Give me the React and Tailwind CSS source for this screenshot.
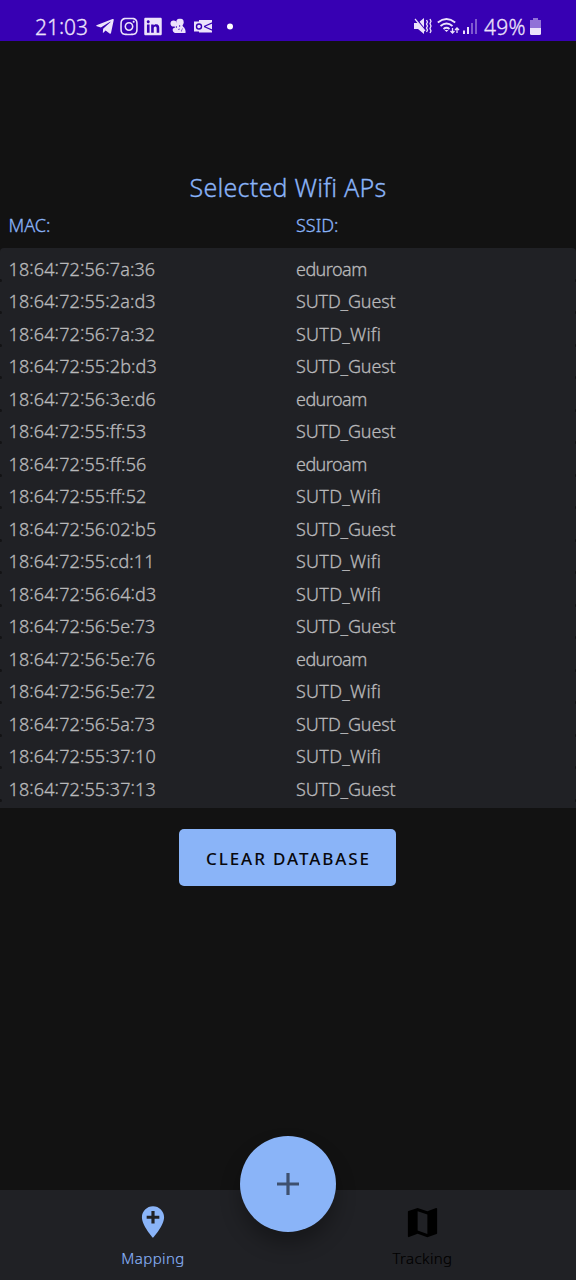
import { FaTelegramPlane, FaInstagram, FaLinkedin } from "react-icons/fa";

const rows = [
  ["18:64:72:56:7a:36", "eduroam"],
  ["18:64:72:55:2a:d3", "SUTD_Guest"],
  ["18:64:72:56:7a:32", "SUTD_Wifi"],
  ["18:64:72:55:2b:d3", "SUTD_Guest"],
  ["18:64:72:56:3e:d6", "eduroam"],
  ["18:64:72:55:ff:53", "SUTD_Guest"],
  ["18:64:72:55:ff:56", "eduroam"],
  ["18:64:72:55:ff:52", "SUTD_Wifi"],
  ["18:64:72:56:02:b5", "SUTD_Guest"],
  ["18:64:72:55:cd:11", "SUTD_Wifi"],
  ["18:64:72:56:64:d3", "SUTD_Wifi"],
  ["18:64:72:56:5e:73", "SUTD_Guest"],
  ["18:64:72:56:5e:76", "eduroam"],
  ["18:64:72:56:5e:72", "SUTD_Wifi"],
  ["18:64:72:56:5a:73", "SUTD_Guest"],
  ["18:64:72:55:37:10", "SUTD_Wifi"],
  ["18:64:72:55:37:13", "SUTD_Guest"],
];

const ssidTracking = {
  eduroam: "tracking-[-0.55px]",
  SUTD_Guest: "tracking-[-0.15px]",
  SUTD_Wifi: "tracking-[0.25px]",
};

// Colons that follow a digit sit a little above the baseline.
function Digits({ text }) {
  return text.split(/(?<=\d)(:)(?=\w)/).map((part, i) =>
    part === ":" ? (
      <span key={i} className="relative -top-[1.5px]">:</span>
    ) : (
      part
    ),
  );
}

function StatusBar() {
  return (
    <header className="flex h-[41px] shrink-0 items-end bg-[#3700b3] pr-[35px] pb-[4px] pl-[35px] text-[#ece2fb]">
      <span className="w-[60px] translate-y-px text-[21px] leading-[22px] whitespace-nowrap"><Digits text="21:03" /></span>
      <div className="flex h-[22px] translate-y-[0.5px] items-center">
        <FaTelegramPlane className="size-[20px]" />
        <FaInstagram className="ml-[4px] size-[20px]" />
        <FaLinkedin className="ml-[4px] size-[20px]" />
        <svg className="ml-[7px] h-[16px] w-[17px]" viewBox="0 0 17 16" fill="currentColor">
          <circle cx="3.6" cy="5" r="3.1" />
          <circle cx="10" cy="3.8" r="3.7" />
          <path d="M4 5l7-1 2 4c2 1.500 3 4 2.500 6.500H5C3.500 14 2 12 3 10l2-1Z" />
          <circle cx="6.400" cy="8.500" r=".7" fill="#3700b3" />
          <circle cx="9.600" cy="7.500" r=".7" fill="#3700b3" />
          <path d="m8 11 2-.5M11.500 13q-.5-2 1.500-3" fill="none" stroke="#3700b3" strokeWidth=".6" />
        </svg>
        <svg className="ml-[7px] h-[16px] w-[19px]" viewBox="0 0 19 16">
          <path d="M5 1.500h13v12.500H5Z" fill="currentColor" />
          <path d="m10 8 9-4M10 8l9 4" fill="none" stroke="#3700b3" strokeWidth="1.300" />
          <path d="M0 3h10v10H0Z" fill="currentColor" />
          <circle cx="5" cy="8" r="2.500" fill="none" stroke="#3700b3" strokeWidth="1.400" />
        </svg>
        <span className="ml-[14px] size-[6px] rounded-full bg-white" />
      </div>
      <div className="ml-auto flex h-[22px] items-center">
        <svg className="h-[18px] w-[18px]" viewBox="0 0 18 18" fill="currentColor">
          <path d="M0 6h4l6-5v16l-6-5H0Z" />
          <path d="m1 0 10 13" stroke="#3700b3" strokeWidth="1.500" />
          <path d="m1 2 10 12" stroke="currentColor" strokeWidth="1.200" />
          <path d="m12.500 3 1 2-1 2 1 2-1 2 1 2-1 2M16 2l1 2.300-1 2.300 1 2.400-1 2.400 1 2.600-1 2" fill="none" stroke="currentColor" strokeWidth="1.300" />
        </svg>
        <svg className="ml-[5px] h-[18px] w-[23px]" viewBox="0 0 23 18" fill="none" stroke="currentColor" strokeWidth="1.800">
          <path d="M.8 5.500Q9.500-1.500 18.200 5.500M3.500 9Q9.500 4 15.500 9M6.500 12Q9.500 9.500 12.500 12" />
          <path d="m7.500 13 2 2 2-2Z" fill="currentColor" stroke="none" />
          <path d="M15.500 11v5m-2-2 2 2 2-2M20 16v-5m-2 2 2-2 2 2" strokeWidth="1.300" />
        </svg>
        <svg className="ml-[3px] h-[16px] w-[15px]" viewBox="0 0 15 16" fill="currentColor">
          <path d="M0 12.500h2v3.500H0ZM4 9h2v7H4Z" />
          <path d="M8 5h2v11H8ZM12 1h2v15h-2Z" opacity=".4" />
        </svg>
        <span className="ml-[6px] w-[44px] translate-y-px text-[21px] leading-[22px] tracking-[0.3px]">49%</span>
        <svg className="ml-[2px] h-[17px] w-[11px]" viewBox="0 0 11 17" fill="currentColor">
          <path d="M3 0h5v2h3v8H0V2h3Z" opacity=".5" />
          <path d="M0 10h11v5.500q0 1.500-1.500 1.500h-8Q0 17 0 15.500Z" />
        </svg>
      </div>
    </header>
  );
}

export default function App() {
  return (
    <div className="flex h-[1280px] w-[576px] flex-col overflow-hidden bg-[#121212] font-['Noto_Sans',sans-serif] font-light [-webkit-text-stroke:0.3px]">
      <StatusBar />
      <main className="flex flex-1 flex-col items-center pt-[128px] text-[#8ab4f8]">
        <h1 className="h-[37px] text-[25px] leading-[36px] tracking-[0.25px] whitespace-nowrap">Selected Wifi APs</h1>
        <div className="grid h-[42px] w-full grid-cols-2 pt-[7px] text-[18px] leading-[25px]">
          <span className="pl-[8.5px]">MAC:</span>
          <span className="pl-[8px]">SSID:</span>
        </div>
        <ul className="h-[560px] w-full rounded-t bg-[#202125] text-[18px] text-[#b8b8ba]">
          {rows.map(([mac, ssid]) => (
            <li key={mac} className="relative grid h-[32.53px] grid-cols-2 pt-[8.5px] leading-[25px]">
              <span className="pl-[8.5px] tracking-[0.12px]"><Digits text={mac} /></span>
              <span className={`pl-[8px] ${ssidTracking[ssid]}`}>{ssid}</span>
              <span className="absolute -bottom-[1px] left-0 h-[3px] w-[1.5px] rounded-r-full bg-[#131315]" />
              <span className="absolute right-0 -bottom-[1px] h-[3px] w-[1.5px] rounded-l-full bg-[#131315]" />
            </li>
          ))}
        </ul>
        <button className="mt-[21px] mr-px h-[57px] w-[217px] rounded-[5px] bg-[#8ab4f8] pt-[2px] pl-[2px] text-[17px] font-medium tracking-[1.9px] whitespace-nowrap text-[#08080c] [-webkit-text-stroke:0px]">
          CLEAR DATABASE
        </button>
      </main>
      <nav className="relative grid h-[90px] shrink-0 grid-cols-[306px_1fr] bg-[#202125] text-[15px] tracking-[0.4px] [-webkit-text-stroke:0.15px]">
        <div className="flex flex-col items-center pt-[13px] text-[#8ab4f8]">
          <svg className="size-[38px]" viewBox="0 0 24 24" fill="currentColor">
            <path d="M12 2C8.140 2 5 5.140 5 9c0 5.250 7 13 7 13s7-7.750 7-13c0-3.860-3.140-7-7-7Zm4 8h-3v3h-2v-3H8V8h3V5h2v3h3Z" />
          </svg>
          <span className="mt-[7px] leading-[20px]">Mapping</span>
        </div>
        <div className="flex flex-col items-center pt-[13px] pr-[37px] text-black">
          <svg className="size-[39px]" viewBox="0 0 24 24" fill="currentColor">
            <path d="m20.500 3-.160.030L15 5.100 9 3 3.360 4.900c-.210.070-.360.250-.360.480V20.500c0 .280.220.500.500.500l.160-.030L9 18.900l6 2.100 5.640-1.900c.210-.070.360-.250.360-.480V3.500c0-.280-.220-.500-.500-.500ZM15 19l-6-2.110V5l6 2.110Z" />
          </svg>
          <span className="mt-[6px] leading-[20px]">Tracking</span>
        </div>
        <button className="absolute -top-[54px] left-[240px] flex size-[96px] items-center justify-center rounded-full bg-[#8ab4f8] shadow-[0_12px_20px_rgba(0,0,0,0.3)]">
          <svg className="size-[22px]" viewBox="0 0 22 22" fill="none" stroke="#3e506f" strokeWidth="3.200">
            <path d="M11 0v22M0 11h22" />
          </svg>
        </button>
      </nav>
    </div>
  );
}
